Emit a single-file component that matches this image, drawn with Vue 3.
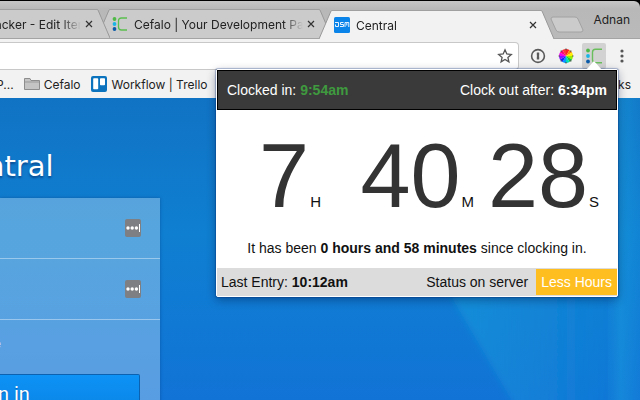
<script setup>
const tabs = [
  { title: 'acker - Edit Item', icon: null, cut: true },
  { title: 'Cefalo | Your Development Partner', icon: 'cefalo' },
  { title: 'Central', icon: 'dsm', active: true }
]
const units = [
  { value: '7', unit: 'H' },
  { value: '40', unit: 'M' },
  { value: '28', unit: 'S' }
]
const wheel = ['#f22', '#f80', '#fe0', '#9e0', '#1c3', '#0db', '#09f', '#12f', '#81f', '#e0e', '#f07', '#f33']
const slice = (i) => {
  const p = (k) => {
    const a = ((k * 30 - 90) * Math.PI) / 180
    return `${(8 + 7 * Math.cos(a)).toFixed(2)} ${(8 + 7 * Math.sin(a)).toFixed(2)}`
  }
  return `M8 8L${p(i)}A7 7 0 0 1 ${p(i + 1)}Z`
}
</script>

<template>
  <div class="browser">
    <header class="strip">
      <div v-for="t in tabs" :key="t.title" class="tab" :class="{ active: t.active, cut: t.cut }">
        <svg v-if="!t.cut" class="edge" viewBox="0 0 13 29" aria-hidden="true">
          <path class="fill" d="M0 29L12 1Q12.500 .5 13 .5V29Z" />
          <path class="line" d="M0 29L12 1Q12.500 .5 13 .5" />
        </svg>
        <div class="tab-body">
          <svg v-if="t.icon === 'cefalo'" class="favicon" viewBox="0 0 16 16" aria-hidden="true">
            <circle cx="2.500" cy="3" r="1.900" fill="#4fb947" />
            <circle cx="2.500" cy="8" r="1.900" fill="#19b5e6" />
            <circle cx="2.500" cy="13" r="1.900" fill="#0b5ba8" />
            <path d="M15 2H9.500Q6.500 2 6.500 5V11Q6.500 14 9.500 14H15" fill="none" stroke="#5cc04f" stroke-width="1.300" />
          </svg>
          <svg v-else-if="t.icon === 'dsm'" class="favicon" viewBox="0 0 16 16" aria-hidden="true">
            <rect width="16" height="16" rx="1.500" fill="#0b84ea" />
            <path d="M1 5.500H4.500V9.500H1.500V7.500M9.500 5.500H6.500V7.500H9.500V9.500H6M11 10V5.500H12.800V8.500M12.800 5.500H14.800V10" fill="none" stroke="#e6f3ff" stroke-width="1" />
          </svg>
          <span class="title">{{ t.title }}</span>
          <button class="close" :aria-label="'Close ' + t.title">
            <svg viewBox="0 0 8 8"><path d="M1 1L7 7M7 1L1 7" stroke="#333" stroke-width="1.200" /></svg>
          </button>
        </div>
        <svg class="edge" viewBox="0 0 13 29" aria-hidden="true">
          <path class="fill" d="M13 29L1 1Q.5 .5 0 .5V29Z" />
          <path class="line" d="M13 29L1 1Q.5 .5 0 .5" />
        </svg>
      </div>
      <button class="new-tab" aria-label="New tab">
        <svg viewBox="0 0 34 18"><path d="M3 1H25Q27 1 28 3L33 14Q33 16 31 16H9Q7 16 6 14L1 3Q1 1 3 1Z" fill="#cbcbcb" stroke="#a2a2a2" /></svg>
      </button>
      <button class="profile">Adnan</button>
    </header>

    <div class="toolbar">
      <div class="address">
        <input type="text" aria-label="Address" />
        <button class="star" aria-label="Bookmark this page">
          <svg viewBox="0 0 16 16"><path d="M8 1.800L9.800 6L14.300 6.400L10.900 9.400L11.900 13.800L8 11.500L4.100 13.800L5.100 9.400L1.700 6.400L6.200 6Z" fill="none" stroke="#555" stroke-width="1.300" /></svg>
        </button>
      </div>
      <button class="tool" aria-label="Password manager">
        <svg viewBox="0 0 16 16"><circle cx="8" cy="8" r="6.400" fill="none" stroke="#5a5a5a" stroke-width="1.600" /><path d="M6.800 4.500H9.200V7.500L8.800 8L9.200 8.500V11.500H6.800V8.500L7.200 8L6.800 7.500Z" fill="#5a5a5a" /></svg>
      </button>
      <button class="tool" aria-label="Colour picker">
        <svg viewBox="0 0 16 16">
          <path v-for="(c, i) in wheel" :key="c" :d="slice(i)" :fill="c" />
          <path d="M8 .5V2M8 14V15.500M.5 8H2M14 8H15.500M2.700 2.700L3.700 3.700M12.300 12.300L13.300 13.300M2.700 13.300L3.700 12.300M12.300 3.700L13.300 2.700" stroke="#555" stroke-width="1.200" />
        </svg>
      </button>
      <button class="tool pressed" aria-label="Cefalo clock">
        <svg viewBox="0 0 16 16">
          <circle cx="2" cy="2.500" r="1.900" fill="#4fb947" />
          <circle cx="2" cy="8" r="1.900" fill="#19b5e6" />
          <circle cx="2" cy="13.500" r="1.900" fill="#0b5ba8" />
          <path d="M16 1.200H9.500Q6.500 1.200 6.500 4.200V11.800Q6.500 14.800 9.500 14.800H16" fill="none" stroke="#6abf5c" stroke-width="1.400" />
        </svg>
      </button>
      <button class="tool" aria-label="Menu">
        <svg viewBox="0 0 16 16" fill="#555"><circle cx="8" cy="3" r="1.600" /><circle cx="8" cy="8" r="1.600" /><circle cx="8" cy="13" r="1.600" /></svg>
      </button>
    </div>

    <nav class="bookmarks">
      <a href="#" class="first">P...</a>
      <a href="#">
        <svg viewBox="0 0 16 14"><path d="M.5 12.500V1.500H6L7 3.500H15.500V12.500Z" fill="#c4c4c4" stroke="#8d8d8d" /><path d="M1 5H15" stroke="#999" /></svg>
        Cefalo
      </a>
      <a href="#" class="trello">
        <svg viewBox="0 0 16 16"><rect width="16" height="16" rx="2" fill="#0c74be" /><rect x="2.200" y="2.200" width="5" height="11" rx=".8" fill="#fff" /><rect x="9" y="2.200" width="5" height="7" rx=".8" fill="#fff" /></svg>
        Workflow | Trello
      </a>
      <a href="#" class="other">ks</a>
    </nav>

    <main class="page">
      <svg class="rays" viewBox="0 0 640 302" preserveAspectRatio="none" aria-hidden="true">
        <defs>
          <linearGradient id="ray" x1="0" x2="1" y1="0" y2="0">
            <stop offset="0" stop-color="#19a0dc" stop-opacity=".55" />
            <stop offset=".5" stop-color="#19a0dc" stop-opacity=".3" />
            <stop offset="1" stop-color="#19a0dc" stop-opacity=".1" />
          </linearGradient>
          <linearGradient id="beam" x1="0" x2="1" y1="0" y2="0">
            <stop offset="0" stop-color="#1aa0e0" stop-opacity=".1" />
            <stop offset=".4" stop-color="#1aa0e0" stop-opacity=".45" />
            <stop offset="1" stop-color="#1aa0e0" stop-opacity=".15" />
          </linearGradient>
          <filter id="soft"><feGaussianBlur stdDeviation="3" /></filter>
        </defs>
        <path d="M435 170L516 310H610V170Z" fill="url(#ray)" filter="url(#soft)" />
        <path d="M608 0H640V302H608Z" fill="url(#beam)" />
      </svg>
      <h1>ntral</h1>
      <form class="login" @submit.prevent>
        <div class="field">
          <input type="text" aria-label="User name" />
          <button type="button" class="fill-in" aria-label="Fill in user name">
            <svg viewBox="0 0 16 18"><circle cx="3" cy="9" r="1.700" /><circle cx="7.200" cy="9" r="1.700" /><circle cx="11.400" cy="9" r="1.700" /><path d="M14 5H15V13H14Z" /></svg>
          </button>
        </div>
        <div class="field">
          <input type="password" aria-label="Password" />
          <button type="button" class="fill-in" aria-label="Fill in password">
            <svg viewBox="0 0 16 18"><circle cx="3" cy="9" r="1.700" /><circle cx="7.200" cy="9" r="1.700" /><circle cx="11.400" cy="9" r="1.700" /><path d="M14 5H15V13H14Z" /></svg>
          </button>
        </div>
        <p class="remember">e</p>
        <button class="submit">n in</button>
      </form>
    </main>

    <section class="popup">
      <svg class="caret" viewBox="0 0 16 9" aria-hidden="true"><path d="M0 9L8 0L16 9Z" fill="#fff" /></svg>
      <header class="times">
        <span>Clocked in: <b class="green">9:54am</b></span>
        <span>Clock out after: <b>6:34pm</b></span>
      </header>
      <div class="clock">
        <div v-for="u in units" :key="u.unit" class="part">
          <span class="num">{{ u.value }}</span><span class="unit">{{ u.unit }}</span>
        </div>
      </div>
      <p class="since">It has been <b>0 hours and 58 minutes</b> since clocking in.</p>
      <footer class="status">
        <span>Last Entry: <b>10:12am</b></span>
        <span class="server">Status on server</span>
        <span class="badge">Less Hours</span>
      </footer>
    </section>
  </div>
</template>

<style>
body {
  background: #000;
}
</style>

<style scoped>
* {
  box-sizing: border-box;
}
button {
  padding: 0;
  border: 0;
  background: none;
  font: inherit;
  color: inherit;
}
svg {
  display: block;
}
.browser {
  position: relative;
  display: flex;
  flex-direction: column;
  height: 100vh;
  overflow: hidden;
  font-family: Inter, Roboto, sans-serif;
  font-size: 12px;
  color: #222;
}
.strip {
  display: flex;
  flex: none;
  align-items: flex-end;
  height: 38px;
  margin-top: 1px;
  padding-right: 10px;
  background: linear-gradient(#c6c6c6, #b8b8b8 8px, #bababa);
  border-bottom: 1px solid #a4a4a4;
  border-top-right-radius: 6px;
}
.tab {
  position: relative;
  display: flex;
  flex: 0 1 235px;
  min-width: 0;
  height: 29px;
  margin-left: -13px;
  --tab: #cbcbcb;
}
.tab.cut {
  flex-basis: 110px;
  margin-left: 0;
  z-index: 1;
}
.tab.active {
  --tab: #f2f2f2;
  z-index: 2;
  margin-bottom: -1px;
}
.edge {
  flex: none;
  width: 13px;
  height: 29px;
}
.fill {
  fill: var(--tab);
}
.line {
  fill: none;
  stroke: #999;
}
.tab-body {
  display: flex;
  flex: 1;
  align-items: center;
  min-width: 0;
  background: var(--tab);
  border-top: 1px solid #a0a0a0;
}
.favicon {
  flex: none;
  width: 16px;
  height: 16px;
  margin-left: 2px;
  margin-right: 6px;
}
.title {
  flex: 1;
  min-width: 0;
  overflow: hidden;
  white-space: nowrap;
  -webkit-mask-image: linear-gradient(to left, transparent, #000 20px);
  mask-image: linear-gradient(to left, transparent, #000 20px);
}
.cut .title {
  margin-left: -5px;
}
.close {
  flex: none;
  margin: 0 4px;
}
.close svg {
  width: 8px;
  height: 8px;
}
.new-tab {
  margin: 0 auto 4px -4px;
}
.new-tab svg {
  width: 34px;
  height: 18px;
}
.profile {
  align-self: center;
}
.toolbar {
  display: flex;
  flex: none;
  align-items: center;
  height: 31px;
  padding: 3px 4px 0 0;
  background: #f2f2f2;
}
.address {
  display: flex;
  flex: 1;
  align-items: center;
  height: 28px;
  margin-right: 5px;
  padding-right: 5px;
  background: #fff;
  border: 1px solid #c8c8c8;
  border-left: 0;
  border-radius: 0 4px 4px 0;
}
.address input {
  flex: 1;
  min-width: 0;
  border: 0;
  background: none;
  outline: 0;
}
.star svg,
.tool svg {
  width: 16px;
  height: 16px;
}
.tool {
  display: flex;
  align-items: center;
  justify-content: center;
  width: 24px;
  height: 26px;
  margin: 0 2px;
}
.tool.pressed {
  background: #d2d2d2;
  border-radius: 2px;
}
.bookmarks {
  display: flex;
  flex: none;
  align-items: center;
  height: 28px;
  padding-right: 9px;
  background: #f2f2f2;
}
.bookmarks a {
  display: flex;
  align-items: center;
  gap: 4px;
  margin-right: 10px;
  color: inherit;
  text-decoration: none;
  white-space: nowrap;
}
.bookmarks a.first {
  margin-left: -4px;
}
.bookmarks a.other {
  margin: 0 0 0 auto;
}
.bookmarks svg {
  width: 16px;
  height: 14px;
}
.bookmarks a.trello {
  gap: 5px;
}
.bookmarks .trello svg {
  height: 16px;
}
.page {
  position: relative;
  flex: 1;
  min-height: 0;
  overflow: hidden;
  background: linear-gradient(#1173c4, #0f7fd1 45%, #1079d4 75%, #1173d6);
}
.rays {
  position: absolute;
  inset: 0;
  width: 100%;
  height: 100%;
}
h1 {
  position: relative;
  margin: 48px 0 12px -14px;
  font: 29px/40px "DejaVu Sans", sans-serif;
  color: #fff;
  text-shadow: 0 2px 2px rgba(0, 30, 90, 0.5);
}
.login {
  position: relative;
  width: 25%;
  height: 232px;
  background: rgba(255, 255, 255, 0.3);
  box-shadow: 0 0 3px rgba(0, 40, 110, 0.4);
}
.field {
  display: flex;
  align-items: center;
  height: 61px;
  padding-right: 19px;
  border-bottom: 1px solid rgba(255, 255, 255, 0.4);
}
.field input {
  flex: 1;
  min-width: 0;
  border: 0;
  background: none;
  outline: 0;
}
.fill-in svg {
  width: 16px;
  height: 18px;
  background: #7d7f82;
  border-radius: 2px;
  fill: #fff;
}
.remember {
  margin: 16px 0 0 -6px;
  font-size: 12px;
  line-height: 16px;
  color: #cfe4f5;
}
.submit {
  display: block;
  width: calc(100% - 20px);
  height: 40px;
  margin-top: 22px;
  border: 1px solid #0b62b0;
  border-left: 0;
  border-radius: 0 2px 2px 0;
  background: linear-gradient(#0d92f5, #0a84e6);
  font: 20px/38px Roboto, sans-serif;
  color: #fff;
  text-align: left;
  text-indent: -2px;
  text-shadow: 0 1px 1px rgba(0, 30, 90, 0.4);
}
.popup {
  position: absolute;
  top: 69px;
  right: 22px;
  z-index: 3;
  width: 402px;
  border: 1px solid #fff;
  border-radius: 2px;
  background: #fff;
  font: 14px/20px "Liberation Sans", Arial, sans-serif;
  color: #111;
  box-shadow: 0 0 1px 1px rgba(0, 40, 120, 0.3), 0 3px 10px rgba(0, 20, 60, 0.4);
}
.caret {
  position: absolute;
  top: -9px;
  right: 15px;
  width: 16px;
  height: 9px;
}
.times {
  display: flex;
  align-items: center;
  justify-content: space-between;
  height: 40px;
  padding: 0 9px;
  background: #3a3a3a;
  border: 1px solid #000;
  color: #fff;
}
.green {
  color: #3f9a3f;
}
.clock {
  display: grid;
  grid-template-columns: 1fr 153px 125px;
  justify-items: end;
  padding: 16px 18px 0 0;
}
.part {
  display: flex;
  align-items: baseline;
}
.num {
  font-size: 90px;
  line-height: 100px;
  color: #333;
}
.unit {
  margin-left: 1px;
  font-size: 15px;
}
.since {
  margin: 12px 0 10px;
  text-align: center;
}
.status {
  display: flex;
  align-items: center;
  height: 28px;
  padding-left: 4px;
  background: #dcdcdc;
}
.server {
  margin-left: auto;
}
.badge {
  margin-left: 8px;
  padding: 3px 5px;
  background: #ffbe1f;
  color: #fff;
}
</style>
